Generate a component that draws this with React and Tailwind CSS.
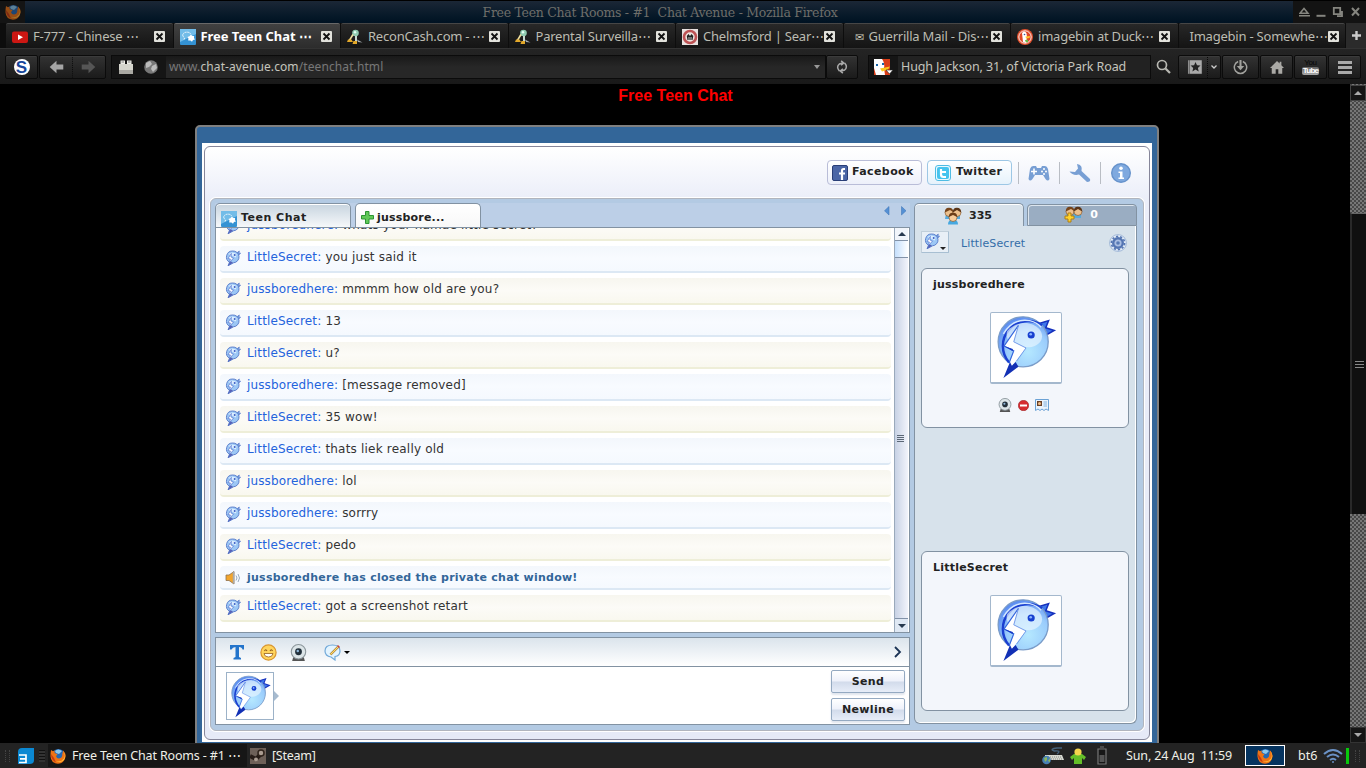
import clsx from "clsx";
import { useId } from "react";

const tabs = [
  { icon: "youtube", title: "F-777 - Chinese ⋯" },
  { icon: "chat", title: "Free Teen Chat ⋯", active: true },
  { icon: "recon", title: "ReconCash.com - ⋯" },
  { icon: "recon", title: "Parental Surveilla⋯" },
  { icon: "badge", title: "Chelmsford | Sear⋯" },
  { icon: "mail", title: "Guerrilla Mail - Dis⋯" },
  { icon: "duck", title: "imagebin at Duck⋯" },
  { icon: null, title: "Imagebin - Somewhe⋯" },
];

const messages = [
  { user: "jussboredhere", text: "whats your namae little secret?" },
  { user: "LittleSecret", text: "you just said it" },
  { user: "jussboredhere", text: "mmmm how old are you?" },
  { user: "LittleSecret", text: "13" },
  { user: "LittleSecret", text: "u?" },
  { user: "jussboredhere", text: "[message removed]" },
  { user: "LittleSecret", text: "35 wow!" },
  { user: "LittleSecret", text: "thats liek really old" },
  { user: "jussboredhere", text: "lol" },
  { user: "jussboredhere", text: "sorrry" },
  { user: "LittleSecret", text: "pedo" },
  { notice: "jussboredhere has closed the private chat window!" },
  { user: "LittleSecret", text: "got a screenshot retart" },
];

const Bird = ({ size }) => {
  const id = useId();
  return (
    <svg width={size} height={size} viewBox="0 0 64 68" className="shrink-0">
      <defs>
        <radialGradient id={id} cx="0.6" cy="0.7" r="0.7">
          <stop offset="0" stopColor="#b5e8ff" />
          <stop offset="0.6" stopColor="#9accfc" />
          <stop offset="1" stopColor="#5b8cf0" />
        </radialGradient>
      </defs>
      <path d="M46 9 56 6 53 13.5 62 16.5 54 21Z" fill="#3f78ea" stroke="#1530bd" strokeWidth="1.6" />
      <circle cx="29" cy="28.5" r="26.6" fill={`url(#${id})`} stroke="#7a9cc8" strokeWidth="1.4" />
      <path d="M14 50.5A26.6 26.6 0 0 1 49 11" fill="none" stroke="#1a3fd0" strokeWidth="2.6" />
      <path d="M8 20Q18 3 36 6 44 8 48 13" fill="none" stroke="#d5e8ff" strokeWidth="1.5" />
      <path d="M12 17C22 6 38 6 46 15 52 22 49 31 38 34 25 36 8 30 12 17Z" fill="#eaf6ff" opacity="0.65" />
      <path d="M24 11 8.6 33 19 38 15 50 8 66 32 35 19 28.5Z" fill="#fff" />
      <path d="M24 11 8.6 33 19 38 14 51" fill="none" stroke="#3465dd" strokeWidth="1.2" />
      <path d="M8.6 33 18 38.5V36Z" fill="#1538c4" />
      <path d="M24 11 19 28.5 32 35 22 49" fill="none" stroke="#6d95e8" strokeWidth="1" />
      <path d="M15 50 8 67 24 55 21 50 17 54Z" fill="#1230b5" />
      <circle cx="37.5" cy="21.3" r="3.8" fill="#163fd0" />
      <circle cx="37" cy="20.5" r="1.4" fill="#8ab4ff" />
    </svg>
  );
};

const BirdBubble = ({ size = 16 }) => (
  <svg width={size} height={size} viewBox="0 0 16 16" className="shrink-0">
    <path d="M12 2.8 14.3 1 13.8 3 15.6 3.3 13.6 5.2" fill="#7ca5e8" stroke="#5276c7" strokeWidth=".7" />
    <path d="M7.5 1A6 5.9 0 0 1 8.5 12.8L3 15.8 4.5 12.2A6 6 0 0 1 7.5 1Z" fill="#9cc7f5" stroke="#5276c7" strokeWidth=".9" />
    <path d="M8 12.8 3 15.8 5.5 11" fill="#5663b8" />
    <path d="M3.5 4Q7 1 11.5 4L11 7.5Z" fill="#dceeff" />
    <path d="M6.4 3.4 3 8.6 5.4 9 4.4 12.6 8.5 8 5.9 7Z" fill="#fff" stroke="#4265c9" strokeWidth=".6" />
    <circle cx="9.7" cy="5" r="1" fill="#3d5fc5" />
  </svg>
);

const Firefox = ({ size = 16 }) => (
  <svg width={size} height={size} viewBox="0 0 16 16" className="shrink-0">
    <circle cx="8.4" cy="7.3" r="6.4" fill="#2468b4" />
    <path d="M5 3Q8 0 12 3L9 6 6 5Z" fill="#8bc8ee" />
    <path d="M1 2 3 3.2 4.6 2.6 4.6 5 7.5 6.2 6 8.2Q7 11 10 10.3 12.5 9.3 12.3 6L13.2 2.6Q16 5.5 15.5 9 14 15.5 8 15.8 1 15.2.5 8.5.4 5 1 2Z" fill="#ee7315" />
    <path d="M13.2 3Q16 7 14 10.5 11 14.5 6 13 10 15.7 14 12 17 7 13.2 3" fill="#ffc43d" />
    <path d="M1 6Q1 12 6 14.4L4 10Z" fill="#c83a12" />
  </svg>
);

const ChatFavicon = () => (
  <svg width="16" height="16" viewBox="0 0 16 16" className="shrink-0">
    <rect width="16" height="16" rx="1" fill="#3492d3" />
    <path d="M0 0H16V5L0 13Z" fill="#72bce8" />
    <path d="M4 10.5 4.6 8.8Q2 7 3 5 4.5 3 7.5 3.2 10 3.4 10.6 5" fill="none" stroke="#fff" strokeWidth=".9" strokeDasharray="1.6 .6" />
    <path d="m11 5.5 1.1 1.4 2 .1-.1 2 1 1.6-2 .5-1 1.6-1.6-1.3-2.2.1.2-2.2L7.4 8l2.1-.8Z" fill="#fff" />
  </svg>
);

const Favicon = ({ name }) => {
  if (name === "chat") return <ChatFavicon />;
  if (name === "mail") return <span className="ml-[5px] w-[9px] text-[11px] text-[#c5c5b5]">✉</span>;
  if (name === "youtube")
    return (
      <svg width="16" height="16" viewBox="0 0 16 16" className="shrink-0">
        <rect y="2.5" width="16" height="11.5" rx="2" fill="#cc1713" />
        <path d="M6 5.5V11L11 8.2Z" fill="#fff" />
      </svg>
    );
  if (name === "recon")
    return (
      <svg width="16" height="16" viewBox="0 0 16 16" className="shrink-0">
        <circle cx="8.5" cy="4" r="3.3" fill="#8fcbb0" />
        <circle cx="8" cy="3.2" r="1.2" fill="#e5fff3" />
        <path d="M9 7V12" stroke="#c8d8ce" strokeWidth="2" />
        <path d="M6 5.5 2 12" stroke="#eee0a0" strokeWidth="1.6" />
        <path d="M1 10.5H4.5L6 13H0ZM6.5 12H10V15H5.5Z" fill="#e3a82a" />
        <path d="M10 10.5 15.5 13.5 11 13Z" fill="#a5acb0" />
      </svg>
    );
  if (name === "badge")
    return (
      <svg width="16" height="16" viewBox="0 0 16 16" className="shrink-0">
        <rect width="16" height="16" fill="#e9e2e0" />
        <circle cx="8" cy="8" r="6" fill="#ece5e0" stroke="#bd5254" strokeWidth="2.6" />
        <path d="M4.8 7 6.5 5 8 7 9.5 5 11.3 7 10.5 11H5.5Z" fill="#222" />
        <path d="M7 8V11M9 8V11" stroke="#eee" strokeWidth=".8" />
      </svg>
    );
  return (
    <svg width="16" height="16" viewBox="0 0 16 16" className="shrink-0">
      <circle cx="8" cy="8" r="8" fill="#e3502d" />
      <circle cx="8" cy="8" r="6.2" fill="#df4826" stroke="#fff" strokeWidth=".9" />
      <path d="M5 4Q8 1 9.5 4.5L10 8 9 14 6 13Z" fill="#fff" />
      <path d="M8.5 7.5 13 7 12.5 9 9 9.4Z" fill="#ffc52b" />
      <path d="M8 11 11 10.7 11 13.4 8.5 12.7Z" fill="#6cba4a" />
      <circle cx="7.5" cy="5.5" r=".8" fill="#345c9a" />
    </svg>
  );
};

const Tab = ({ icon, title, active }) => (
  <div
    className={clsx(
      "flex h-[25px] w-[166.5px] shrink-0 items-center rounded-t-[2px] border-t pt-[2px] pr-[8px] pl-[6px]",
      active
        ? "border-[#686868] bg-linear-to-b from-[#414141] to-[#2c2c2c] font-bold text-white"
        : "border-[#464646] bg-linear-to-b from-[#282828] to-[#141414] text-[#bcbcb2]"
    )}
  >
    {icon && <Favicon name={icon} />}
    <span
      className={clsx(
        "grow pl-[5px] text-[13px] whitespace-nowrap",
        active ? "tracking-[-0.05px]" : "tracking-[-0.22px]"
      )}
    >
      {title}
    </span>
    <svg width="11" height="11" viewBox="0 0 11 11" className="mb-[2px] shrink-0">
      <rect width="11" height="11" rx="1" fill="#e2e2dc" />
      <path d="M2.5 2.5 8.5 8.5M8.5 2.5 2.5 8.5" stroke="#111" strokeWidth="1.8" />
    </svg>
  </div>
);

const ToolButton = ({ className, children }) => (
  <div
    className={clsx(
      "flex h-6 shrink-0 items-center justify-center rounded-[2px] border border-[#0b0b0b] bg-linear-to-b from-[#333] to-[#1b1b1b] shadow-[inset_0_1px_#3b3b3b]",
      className
    )}
  >
    {children}
  </div>
);

const TitleBar = () => (
  <div className="flex h-[23px] items-center border-t border-black bg-linear-to-b from-[#1b2736] to-[#001222]">
    <div className="flex h-full w-[25px] items-center justify-center bg-[#141414]">
      <div className="opacity-60">
        <Firefox />
      </div>
    </div>
    <div className="grow pt-[3px] pl-[2px] text-center font-['DejaVu_Serif'] text-[12.5px] tracking-[-0.29px] whitespace-nowrap text-[#6e6e6a]">
      Free Teen Chat Rooms - #1&nbsp; Chat Avenue - Mozilla Firefox
    </div>
    <div className="flex h-full w-[73px] items-center bg-[#131313] pl-[6px]">
      <svg width="66" height="14" viewBox="0 0 66 14" fill="none" stroke="#85857f" strokeWidth="1.5">
        <path d="M1 8.2 5 3.5 9 8.2ZM0 10.7H11" />
        <path d="M17.5 10.8H26.5" strokeWidth="2" />
        <path d="M34.8 2.8H41.2V9.2H34.8ZM43 6V11.2H38" strokeWidth="1.8" />
        <path d="M53 3 60 10.5M60 3 53 10.5" strokeWidth="2" />
      </svg>
    </div>
  </div>
);

const Toolbar = () => (
  <div className="flex h-[35px] items-center bg-linear-to-b from-[#242424] to-[#191919] pt-px pl-[5px] text-[#bdbdbd]">
    <ToolButton className="w-[33px]">
      <div className="flex size-4 items-center justify-center rounded-full bg-white font-['Liberation_Sans'] text-[17px] leading-none font-bold text-[#17469a]">
        S
      </div>
    </ToolButton>
    <ToolButton className="ml-px w-[67px]">
      <svg width="67" height="22" viewBox="0 0 67 22">
        <path d="M10 11 17 4.5V8.5H24V13.5H17V17.5Z" fill="#a5a5a5" />
        <path d="M33.5 1V22" stroke="#0c0c0c" strokeDasharray="1 1" />
        <path d="M57 11 50 4.5V8.5H43V13.5H50V17.5Z" fill="#555" />
      </svg>
    </ToolButton>
    <div className="ml-[5px] flex h-6 w-[715px] items-center border border-[#0b0b0b] bg-linear-to-b from-[#191919] via-[#272727] to-[#272727]">
      <div className="flex h-full w-[54px] items-center gap-[10px] bg-[#151515] pl-[6px]">
        <svg width="16" height="16" viewBox="0 0 16 16">
          <path d="M1 5H15V15H1Z" fill="#d5d5cd" />
          <path d="M1 11H15V15H1Z" fill="#aaa9a3" />
          <path d="M2.5 1.5H7V5H2.5ZM9 1.5H13.5V5H9Z" fill="#ecece6" />
          <path d="M3.5 3H6M10 3H12.5" stroke="#666" strokeWidth=".8" />
        </svg>
        <svg width="14" height="14" viewBox="0 0 14 14">
          <circle cx="7" cy="7" r="6.8" fill="#777" />
          <path d="M2 3 6 1 8 4 5 7 2 8ZM8 6 12 4 13 8 9 12 7 9Z" fill="#bbb" />
        </svg>
      </div>
      <div className="grow pl-[3px] text-[12px] tracking-[0.1px] whitespace-nowrap text-[#777]">
        www.<span className="text-[#c5c5bd]">chat-avenue.com</span>/teenchat.html
      </div>
      <div className="mr-[5px] border-x-[3px] border-t-[4px] border-x-transparent border-t-[#999]"></div>
    </div>
    <ToolButton className="w-8">
      <svg width="14" height="14" viewBox="0 0 16 16" fill="none" stroke="#aaa" strokeWidth="1.7">
        <path d="M5 12.5Q1 8 5 4.5L9 3.5M7 1 10 3.5 7 6M11 3.5Q15 8 11 11.5L7 12.5M9 10 6 12.5 9 15" />
      </svg>
    </ToolButton>
    <div className="ml-[10px] flex h-6 w-[283px] items-center border border-[#0b0b0b] bg-[#222]">
      <div className="flex h-full w-[29px] items-center bg-[#151515] pl-[5px]">
        <svg width="20" height="16" viewBox="0 0 20 16">
          <rect width="16" height="16" fill="#da3c16" />
          <path d="M0 0H8Q11 4 10 9L11 16H2L0 9Z" fill="#fff" />
          <path d="M6 9.5 16 7.5 14 10.5 8 12.5Z" fill="#fbc51b" />
          <path d="M2 5H4V7H2ZM8 4H10V6H8Z" fill="#1764a9" />
          <path d="M12 11H19L15.5 15Z" fill="#fff" stroke="#222" strokeWidth=".6" />
        </svg>
      </div>
      <span className="pt-px pl-[3px] text-[12.5px] tracking-[-0.12px] whitespace-nowrap text-[#c5c5bd]">
        Hugh Jackson, 31, of Victoria Park Road
      </span>
    </div>
    <svg width="16" height="16" viewBox="0 0 16 16" fill="none" stroke="#b7b7b1" className="mr-[6px] ml-[5px] shrink-0">
      <circle cx="6" cy="6" r="4.5" strokeWidth="1.7" />
      <path d="M9.5 9.5 14 14" strokeWidth="2.2" />
    </svg>
    <ToolButton className="w-[43px]">
      <svg width="41" height="22" viewBox="0 0 41 22">
        <path d="M9 4H23V18H9ZM10.5 4V18" fill="#aaa" stroke="#333" strokeWidth=".5" />
        <path d="m16.5 6 1.5 3.3 3.5.3-2.6 2.3.8 3.5-3.2-1.8-3.1 1.8.8-3.5-2.6-2.3 3.5-.3Z" fill="#222" />
        <path d="M28.5 1V22" stroke="#090909" strokeDasharray="1 1" />
        <path d="m32.5 9.5 2.5 2.5 2.5-2.5" fill="none" stroke="#ccc" strokeWidth="1.3" />
      </svg>
    </ToolButton>
    <ToolButton className="ml-px w-[37px]">
      <svg width="15" height="15" viewBox="0 0 16 16" fill="none" stroke="#a2a29e" strokeWidth="1.6">
        <path d="M5.5 1.6A6.6 6.6 0 1 0 10.5 1.6" />
        <path d="M8 0V8" strokeWidth="2.2" />
        <path d="M4 6.5H12L8 11Z" fill="#a2a29e" stroke="none" />
      </svg>
    </ToolButton>
    <ToolButton className="ml-px w-[33px]">
      <svg width="14" height="15" viewBox="0 0 16 16">
        <path d="M0 8.5 8 .5 11 3.5V1.5H13V5.5L16 8.5H14V15H9.5V10H6.5V15H2V8.5Z" fill="#aaa9a5" />
      </svg>
    </ToolButton>
    <ToolButton className="ml-px w-[33px]">
      <div className="flex flex-col items-center font-['Liberation_Sans'] text-[8px] leading-[8px] tracking-[-0.4px]">
        <span className="text-[#050505]">You</span>
        <span className="rounded-[2px] bg-linear-to-b from-[#666] to-[#aaa] px-px font-bold tracking-[-0.8px] text-white">Tube</span>
      </div>
    </ToolButton>
    <ToolButton className="ml-px w-[33px]">
      <div className="flex w-[14px] flex-col gap-[2px]">
        <div className="h-[3px] bg-[#aaa]"></div>
        <div className="h-[3px] bg-[#aaa]"></div>
        <div className="h-[3px] bg-[#aaa]"></div>
      </div>
    </ToolButton>
  </div>
);

const Speaker = () => (
  <svg width="16" height="16" viewBox="0 0 16 16" className="shrink-0">
    <path d="M1 5H4L9 1.5V14L4 10.5H1Z" fill="#f2a52c" stroke="#8e7151" strokeWidth=".8" />
    <path d="M8.5 2V13.5" stroke="#aaa" strokeWidth="1.5" />
    <path d="M11 5.5Q13 8 11 10.5M13 4Q16 8 13 12" fill="none" stroke="#98aabc" />
  </svg>
);

const Webcam = ({ size = 16 }) => (
  <svg width={size} height={size} viewBox="0 0 16 16">
    <path d="M3 12.5H13L14 16H2Z" fill="#555" />
    <circle cx="8" cy="7.3" r="6.8" fill="#dce5e8" stroke="#8b969b" strokeWidth="1" />
    <circle cx="8" cy="7.3" r="3.2" fill="#22303b" />
    <circle cx="7.3" cy="6.5" r="1.2" fill="#91b9db" />
  </svg>
);

const ChatRow = ({ message, blue }) => (
  <div
    className={clsx(
      "mb-[5px] flex shrink-0 rounded-[4px] border-b-2 bg-linear-to-b pl-[5px] whitespace-nowrap",
      message.notice ? "h-6" : "h-[27px]",
      blue
        ? "border-[#dce8f4] from-[#f3f7fc] via-[#f8fbff] to-[#f5f9fe]"
        : "border-[#eeeed8] from-[#f7f6ef] via-[#fcfbf7] to-[#f9f8ef]"
    )}
  >
    {message.notice ? (
      <>
        <div className="pt-[4px]">
          <Speaker />
        </div>
        <span className="pt-px pl-[6px] text-[11px] leading-[22px] font-bold tracking-[0.26px] text-[#336699]">
          {message.notice}
        </span>
      </>
    ) : (
      <>
        <div className="pt-[4px]">
          <BirdBubble />
        </div>
        <span className="pl-[6px] text-[12px] leading-[22px] tracking-[0.2px] text-[#333]">
          <span className="tracking-[0.14px] text-[#2463dc]">{message.user}:</span> {message.text}
        </span>
      </>
    )}
  </div>
);

const People = ({ add }) => (
  <svg width="20" height="18" viewBox="0 0 20 18">
    <path d="M3 7H17V12H2Z" fill="#55aade" />
    <circle cx="6" cy="5.5" r="4" fill="#ecc08d" stroke="#7a4b20" strokeWidth=".6" />
    <path d="M1.8 5.5Q2 .5 6 .8 10 .8 10.2 5L7 3Z" fill="#76451c" />
    <circle cx="14" cy="5.5" r="4" fill="#ecc08d" stroke="#7a4b20" strokeWidth=".6" />
    <path d="M9.8 5.5Q10 .5 14 .8 18 .8 18.2 5.5L14 3Z" fill="#5b3518" />
    {add ? (
      <path d="M4 7H7V10H10V13H7V16H4V13H1V10H4Z" fill="#ffd22b" stroke="#af7e16" />
    ) : (
      <>
        <path d="M5 17.5Q5 12.5 10 12.5 15 12.5 15 17.5Z" fill="#46a8e0" />
        <circle cx="10" cy="10.5" r="4" fill="#f6cc9b" stroke="#7a4b20" strokeWidth=".6" />
        <path d="M5.8 10Q6 5.5 10 5.8 14 5.5 14.2 10L10 8Z" fill="#6b3d18" />
      </>
    )}
  </svg>
);

const UserCard = ({ name, tools }) => (
  <div className="flex h-40 w-52 shrink-0 flex-col items-center rounded-[6px] border border-[#8292a2] bg-[#f3f6fb]">
    <div className="h-[43px] w-full pt-[9px] pl-[11px] text-[11px] leading-[14px] font-bold tracking-[0.22px] text-[#222]">
      {name}
    </div>
    <div className="ml-[2px] flex size-[72px] items-center justify-center rounded-[2px] border border-b-2 border-[#a4b8cd] bg-white pb-px">
      <Bird size={64} />
    </div>
    {tools && (
      <div className="mt-[14px] flex items-center gap-[6px] pr-[3px]">
        <Webcam size={14} />
        <svg width="11" height="11" viewBox="0 0 11 11">
          <circle cx="5.5" cy="5.5" r="5.2" fill="#d62c31" stroke="#9d2a2b" strokeWidth=".6" />
          <path d="M2 4.5H9V6.5H2Z" fill="#fff" />
        </svg>
        <svg width="14" height="12" viewBox="0 0 14 12">
          <path d="M.5.5H13.5V11.5L11 10 9 11.5 7 10 5 11.5 3 10 .5 11.5Z" fill="#eaf4fd" stroke="#6ba2d5" />
          <path d="M2 2H7V7H2Z" fill="#694126" />
          <circle cx="4.5" cy="4.5" r="1.5" fill="#f2bf89" />
          <path d="M8.5 3H12M8.5 5H12M8.5 7H12" stroke="#6ba2d5" strokeWidth=".8" />
        </svg>
      </div>
    )}
  </div>
);

const ChatHeader = () => (
  <div className="flex h-[51px] shrink-0 items-center justify-end pr-[13px] text-[11px] font-bold tracking-[0.4px] text-[#222]">
    <div className="flex h-[25px] w-[95px] items-center gap-1 rounded-[4px] border border-[#b9bdd8] bg-linear-to-b from-white to-[#edf0fa] pl-[4px]">
      <svg width="16" height="16" viewBox="0 0 16 16">
        <rect x=".5" y=".5" width="15" height="15" rx="1.5" fill="#4b66a6" stroke="#293e77" />
        <path d="M13 4H11.5Q10 4 10 6V15M7 8.5H13" fill="none" stroke="#fff" strokeWidth="2.2" />
      </svg>
      Facebook
    </div>
    <div className="ml-[5px] flex h-[25px] w-[85px] items-center gap-[5px] rounded-[4px] border border-[#9dc7e5] bg-linear-to-b from-white to-[#e6f2fb] pl-[7px]">
      <svg width="16" height="16" viewBox="0 0 16 16">
        <rect x=".5" y=".5" width="15" height="15" rx="2.5" fill="#e9f9ff" stroke="#4ebce3" />
        <rect x="2" y="2" width="12" height="12" rx="2" fill="#46c4ee" />
        <path d="M6 4V9.5Q6 12 8.5 12H11M6 7H11" fill="none" stroke="#fff" strokeWidth="2.2" />
      </svg>
      Twitter
    </div>
    <div className="ml-[6px] h-[22px] w-px bg-[#b9bdc4]"></div>
    <svg width="22" height="18" viewBox="0 0 22 18" className="ml-[9px]">
      <path d="M5 2H8L9 4H13L14 2H17Q19 2 20 5L21.5 15Q20 18 17.5 15L15 11H7L4.5 15Q2 18 .5 15L2 5Q3 2 5 2Z" fill="#789fd4" />
      <path d="M6 4.5V10.5M3 7.5H9" stroke="#fff" strokeWidth="1.6" />
      <circle cx="16" cy="5" r="1" fill="#fff" />
      <circle cx="14" cy="7.5" r="1" fill="#fff" />
      <circle cx="18" cy="7.5" r="1" fill="#fff" />
      <circle cx="16" cy="10" r="1" fill="#fff" />
    </svg>
    <div className="ml-[9px] h-[22px] w-px bg-[#b9bdc4]"></div>
    <svg width="22" height="20" viewBox="0 0 22 20" className="ml-[9px]">
      <path d="M8 1Q14 2 12.5 8L21 16Q22 19 18 19L10 11.5Q4 13 .5 8.5L6 9 9 5.5Z" fill="#789fd4" />
    </svg>
    <div className="ml-[9px] h-[22px] w-px bg-[#b9bdc4]"></div>
    <svg width="20" height="20" viewBox="0 0 20 20" className="ml-[10px]">
      <circle cx="10" cy="10" r="9.3" fill="#7fa9df" stroke="#6692cb" strokeWidth="1.4" />
      <circle cx="10" cy="5.2" r="1.8" fill="#fff" />
      <path d="M7.5 8.5H11.5V14.5H13V16H7.5V14.5H9V10H7.5Z" fill="#fff" />
    </svg>
  </div>
);

const Scrollbar = () => (
  <div className="flex w-[15px] shrink-0 flex-col border-x border-[#9aa9bb] border-r-white bg-linear-to-r from-[#c8d2e5] to-[#f2f4fb]">
    <div className="flex h-[13px] items-center justify-center border-b border-[#8292a8] bg-[#f1f5fb]">
      <div className="border-x-4 border-b-4 border-x-transparent border-b-[#27394f]"></div>
    </div>
    <div className="h-[17px] border-b border-[#8292a8] bg-linear-to-r from-[#c5dffc] to-white"></div>
    <div className="flex grow flex-col items-center justify-center gap-px pr-[2px]">
      <div className="h-px w-[7px] bg-[#5b6776]"></div>
      <div className="h-px w-[7px] bg-[#5b6776]"></div>
      <div className="h-px w-[7px] bg-[#5b6776]"></div>
      <div className="h-px w-[7px] bg-[#5b6776]"></div>
    </div>
    <div className="flex h-[14px] items-center justify-center border-t border-[#8292a8] bg-[#dfe8f4]">
      <div className="border-x-4 border-t-4 border-x-transparent border-t-[#27394f]"></div>
    </div>
  </div>
);

const SendButton = ({ children }) => (
  <div className="flex h-[23px] w-[74px] items-center justify-center rounded-[2px] border border-[#94a9c1] bg-[linear-gradient(#fff,#eef1fa_48%,#d2dbeb_52%,#e7edf8)] pt-[2px] text-[11px] font-bold tracking-[0.35px] text-[#222] shadow-[0_2px_2px_#e0e5ee]">
    {children}
  </div>
);

const ChatColumn = () => (
  <div className="flex w-[695px] shrink-0 flex-col">
    <div className="flex h-[24px] shrink-0 items-end bg-[#bccfe7] text-[11px] font-bold text-[#222]">
      <div className="flex h-6 w-[136px] items-center gap-[4px] rounded-t-[5px] border border-b-0 border-[#8292a2] bg-linear-to-b from-[#c7d4df] to-[#f6f8fa] pt-[6px] pl-[5px] tracking-[0.5px] shadow-[inset_0_1px_#fff]">
        <ChatFavicon />
        Teen Chat
      </div>
      <div className="ml-1 flex h-6 w-[126px] items-center gap-[3px] rounded-t-[5px] border border-b-0 border-[#8292a2] bg-linear-to-b from-white to-[#f8f8f8] pt-[6px] pl-[5px] tracking-[0.2px]">
        <svg width="13" height="13" viewBox="0 0 13 13" className="mb-[3px]">
          <path d="M4.5.5H8V4.5H12.5V8H8V12.5H4.5V8H.5V4.5H4.5Z" fill="#60c857" stroke="#2c9432" />
        </svg>
        jussbore...
      </div>
      <svg width="25" height="24" viewBox="0 0 25 24" className="mr-[2px] ml-auto">
        <path d="M6 3.5V12L1.5 7.8ZM18.5 3.5V12L23 7.8Z" fill="#5590d4" stroke="#4379ba" strokeWidth=".6" />
      </svg>
    </div>
    <div className="flex h-[406px] shrink-0 border border-[#8292a2] bg-white">
      <div className="flex h-full grow flex-col overflow-hidden pr-[3px] pl-[4px]">
        <div className="-mt-[14px] flex flex-col">
          {messages.map((m, i) => (
            <ChatRow key={i} message={m} blue={i % 2 === 1} />
          ))}
        </div>
      </div>
      <Scrollbar />
    </div>
    <div className="mt-1 flex h-[88px] shrink-0 flex-col border border-[#8292a2] bg-white">
      <div className="flex h-[29px] shrink-0 items-center border-b border-[#8292a2] bg-linear-to-b from-[#dbe4ec] to-white pl-[13px]">
        <svg width="16" height="16" viewBox="0 0 16 16">
          <path d="M1 1H15V5.5H13.5Q13 3 10 3V13L12 14V15.5H4.5V14L6.5 13V3Q3.5 3 2.5 5.5H1Z" fill="#2374cb" />
        </svg>
        <svg width="17" height="17" viewBox="0 0 17 17" className="ml-[15px]">
          <circle cx="8.5" cy="8.5" r="7.6" fill="#ffd45c" stroke="#da952d" strokeWidth="1.2" />
          <path d="M4.5 7Q5.7 4.5 7 7M10 7Q11.3 4.5 12.5 7" fill="none" stroke="#8d5718" strokeWidth="1.1" />
          <path d="M4 9.5H13Q12.5 13 8.5 13 4.5 13 4 9.5Z" fill="#fff" stroke="#95601e" strokeWidth=".8" />
        </svg>
        <div className="ml-[13px]">
          <Webcam size={17} />
        </div>
        <svg width="18" height="17" viewBox="0 0 18 17" className="ml-[17px]">
          <path d="M8.5 1Q16 1 16 7 16 12 11 12.5L11 16 7 13Q1 12 1 7 1 1 8.5 1Z" fill="#e3f4ff" stroke="#71a9d9" strokeWidth="1.2" />
          <path d="M6.5 10.5 14 3" stroke="#8b6420" strokeWidth="2.4" />
          <path d="M6.5 10.5 14 3" stroke="#ffd76a" strokeWidth="1.2" />
          <path d="m14 1 2 2-1 1-2-2Z" fill="#c84137" />
        </svg>
        <div className="ml-[2px] border-x-[3px] border-t-[3px] border-x-transparent border-t-black"></div>
        <svg width="8" height="12" viewBox="0 0 8 12" className="mr-[7px] ml-auto">
          <path d="M1 1 6 6 1 11" fill="none" stroke="#1b3355" strokeWidth="1.8" />
        </svg>
      </div>
      <div className="flex grow pl-[10px]">
        <div className="mt-[5px] flex size-12 items-center justify-center border border-[#9cb2c8]">
          <Bird size={43} />
        </div>
        <div className="mt-[24px] h-0 border-y-[5px] border-l-[5px] border-y-transparent border-l-[#a7bbcf]"></div>
        <div className="mt-[3px] mr-[4px] ml-auto flex flex-col gap-[5px]">
          <SendButton>Send</SendButton>
          <SendButton>Newline</SendButton>
        </div>
      </div>
    </div>
  </div>
);

const UserColumn = () => (
  <div className="flex h-[521px] w-[223px] shrink-0 flex-col">
    <div className="flex h-[23px] shrink-0 items-end text-[11px] font-bold text-[#222]">
      <div className="flex h-[23px] w-[110px] items-center justify-center gap-[6px] rounded-t-[5px] border border-b-0 border-[#8292a2] bg-[#d8e2eb] pt-[2px] pr-[3px] shadow-[inset_0_1px_#fff]">
        <People />
        335
      </div>
      <div className="ml-[3px] flex h-[22px] w-[110px] items-center justify-center gap-[6px] rounded-t-[4px] border border-[#8292a2] bg-[#9aadc2] pr-[2px] text-white shadow-[inset_1px_1px_#dce5ee]">
        <People add />
        0
      </div>
    </div>
    <div className="flex grow flex-col rounded-b-[6px] border border-t-0 border-[#8292a2] bg-[#d7e2eb] pl-[6px] shadow-[inset_-1px_-1px_#fff]">
      <div className="flex h-[42px] shrink-0 items-start pt-[5px]">
        <div className="flex h-[22px] w-7 rounded-[1px] border border-[#c1cfda] border-r-[#a8bfd2] border-b-[#a8bfd2] bg-[#e8eff6] pl-[2px] pt-px">
          <BirdBubble />
          <div className="mt-[14px] border-x-[3px] border-t-[3px] border-x-transparent border-t-[#222]"></div>
        </div>
        <span className="pt-[4px] pl-[12px] text-[11px] leading-[18px] tracking-[0.12px] text-[#336da8]">LittleSecret</span>
        <svg width="18" height="18" viewBox="0 0 18 18" className="mt-[3px] mr-[9px] ml-auto">
          <circle cx="9" cy="9" r="8.4" fill="#e5eef8" stroke="#90abd0" strokeWidth=".8" />
          <circle cx="9" cy="9" r="4.8" fill="#aabee2" stroke="#5576b3" strokeWidth="2.4" />
          <circle cx="9" cy="9" r="6.6" fill="none" stroke="#5576b3" strokeWidth="1.6" strokeDasharray="2.2 1.93" />
          <circle cx="9" cy="9" r="1.8" fill="#587ab6" />
        </svg>
      </div>
      <UserCard name="jussboredhere" tools />
      <div className="h-[123px] shrink-0"></div>
      <UserCard name="LittleSecret" />
    </div>
  </div>
);

const Page = () => (
  <div className="flex h-[659px] overflow-hidden bg-black">
    <div className="flex w-[1350px] shrink-0 flex-col">
      <h1 className="h-[41px] shrink-0 pt-[2px] pl-px text-center font-['Liberation_Sans'] text-[16px] leading-5 font-bold text-[#f00]">
        Free Teen Chat
      </h1>
      <div className="ml-[195px] flex h-[640px] w-[964px] shrink-0 flex-col rounded-t-[5px] border-2 border-[#808080] bg-[#336699] px-[5px] pt-4 font-['DejaVu_Sans']">
        <div className="h-[599px] bg-white px-[2px] pt-[3px]">
          <div className="flex h-[594px] flex-col rounded-[6px] border border-[#86869a] bg-[linear-gradient(#fff,#ebeef9_52px,#e6eaf7)] px-[5px]">
            <ChatHeader />
            <div className="flex h-[533px] gap-1 rounded-[6px] border border-[#b1b5be] bg-[#b3cae3] pt-[4px] pl-[4px] shadow-[0_0_0_1px_#fff]">
              <ChatColumn />
              <UserColumn />
            </div>
          </div>
        </div>
      </div>
    </div>
    <div className="flex w-4 shrink-0 flex-col bg-[repeating-conic-gradient(#777_0_25%,#484848_0_50%)] bg-[length:4px_4px]">
      <div className="mt-px flex h-4 shrink-0 items-center justify-center border border-[#444] bg-[#151515]">
        <div className="border-x-4 border-b-4 border-x-transparent border-b-[#aaa]"></div>
      </div>
      <div className="mt-[112px] flex h-[301px] shrink-0 flex-col items-center justify-center gap-[2px] border-t border-l-2 border-t-[#666] border-l-[#292929] bg-[#101010]">
        <div className="h-px w-[9px] bg-[#888]"></div>
        <div className="h-px w-[9px] bg-[#888]"></div>
        <div className="h-px w-[9px] bg-[#888]"></div>
      </div>
      <div className="mt-auto flex h-4 items-center justify-center border border-[#333] bg-[#151515]">
        <div className="border-x-4 border-t-4 border-x-transparent border-t-[#aaa]"></div>
      </div>
    </div>
  </div>
);

const Taskbar = () => (
  <div className="flex h-[25px] items-center bg-[#232323] text-[12.5px] whitespace-nowrap text-[#f0f0e8]">
    <div className="ml-[5px] h-3 w-[5px] border-x border-dotted border-[#444]"></div>
    <svg width="16" height="16" viewBox="0 0 16 16" className="ml-[8px]">
      <path d="M4 0H16V12Q16 16 12 16H0V4Q0 0 4 0Z" fill="#0b88d2" />
      <path d="M1 7H8V14.5H1M2 10.8H8" fill="none" stroke="#fff" strokeWidth="1.7" />
    </svg>
    <div className="ml-[5px] h-3 w-[6px] bg-[repeating-linear-gradient(#111_0_1px,#333_1px_3px)]"></div>
    <div className="ml-[3px] flex h-[23px] w-[199px] items-center bg-[#161616] pl-[2px]">
      <Firefox />
      <span className="pt-[2px] pl-[6px] tracking-[-0.16px]">Free Teen Chat Rooms - #1 ⋯</span>
    </div>
    <svg width="16" height="16" viewBox="0 0 16 16" className="ml-[3px]">
      <rect width="16" height="16" fill="#6d6058" />
      <path d="M0 8 6 11 11 6" fill="none" stroke="#271c17" strokeWidth="4" />
      <circle cx="11" cy="5" r="3" fill="#aa9c91" stroke="#30241c" strokeWidth="1.5" />
      <circle cx="6" cy="11.5" r="2" fill="#aa9c91" />
    </svg>
    <span className="pt-px pl-[6px] tracking-[-0.25px]">[Steam]</span>
    <svg width="22" height="18" viewBox="0 0 22 18" className="ml-auto">
      <path d="M3 8H20L22 13H3Z" fill="#d6d8d0" />
      <path d="M4 10H20M5 12H20" stroke="#8a8c87" strokeDasharray="1 1" />
      <path d="M15 7Q20 3 12 4 7 2 15 1H20" fill="none" stroke="#46627b" strokeWidth="1.3" />
      <circle cx="4.5" cy="13" r="4.3" fill="#477fb4" />
      <path d="M2 11 5 10 5 13 3 15ZM6 14 8 11 8 15Z" fill="#8db75c" />
    </svg>
    <svg width="16" height="16" viewBox="0 0 16 16" className="ml-[6px]">
      <path d="M4 6H12L16 9 14 12 12 10V16H4V10L2 12 0 9Z" fill="#65bf29" />
      <circle cx="8" cy="4" r="3.6" fill="#f4d64d" />
    </svg>
    <svg width="10" height="19" viewBox="0 0 10 19" className="ml-[11px]">
      <path d="M1 3H9V18H1ZM3 1H7" fill="#171717" stroke="#777" strokeWidth="1.2" />
      <path d="M2.5 9H7.5V16H2.5Z" fill="#555" />
    </svg>
    <span className="ml-[19px] w-[107px] pt-px tracking-[-0.12px]">Sun, 24 Aug&nbsp; 11:59</span>
    <div className="ml-[12px] flex h-[21px] w-10 items-center justify-center border border-white bg-[#06345f]">
      <Firefox />
    </div>
    <span className="ml-[13px] w-[19px] pt-px">bt6</span>
    <svg width="20" height="16" viewBox="0 0 20 16" fill="none" stroke="#6a91c5" strokeWidth="2" className="ml-[6px]">
      <path d="M1 6Q10-2 19 6M4 9Q10 4 16 9M7 12Q10 9.5 13 12" />
      <circle cx="10" cy="14" r="1" fill="#6a91c5" stroke="none" />
    </svg>
    <div className="ml-[3px] h-4 w-[3px] bg-[#08c90c]"></div>
    <div className="mr-[6px] ml-[6px] h-3 w-[5px] border-x border-dotted border-[#444]"></div>
  </div>
);

export default function App() {
  return (
    <div className="h-[768px] w-[1366px] overflow-hidden bg-black font-['Noto_Sans',sans-serif]">
      <TitleBar />
      <div className="flex h-[26px] items-start gap-px border-b border-[#333] bg-[#0d0d0d] pl-[6px]">
        {tabs.map((tab) => (
          <Tab key={tab.title} {...tab} />
        ))}
        <div className="flex h-[25px] grow items-center justify-center bg-[#2b2b2b]">
          <svg width="9" height="9" viewBox="0 0 9 9">
            <path d="M4.5 0V9M0 4.5H9" stroke="#ccc" strokeWidth="2.4" />
          </svg>
        </div>
      </div>
      <Toolbar />
      <Page />
      <Taskbar />
    </div>
  );
}
